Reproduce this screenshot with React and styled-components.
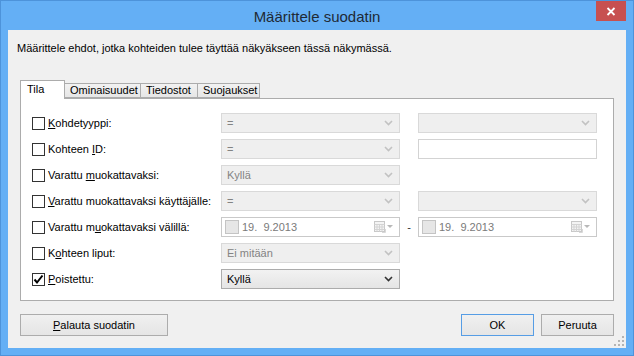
import styled, { createGlobalStyle } from "styled-components";

const GlobalStyle = createGlobalStyle`
  html, body {
    margin: 0;
    padding: 0;
  }
  body {
    width: 634px;
    height: 356px;
    overflow: hidden;
    font-family: "Liberation Sans", Arial, sans-serif;
    font-size: 11px;
    color: #000;
  }
`;

const Frame = styled.div`
  width: 634px;
  height: 356px;
  box-sizing: border-box;
  border: 1px solid #4d93da;
  background: #64aff5;
  display: flex;
  flex-direction: column;
`;

const TitleBar = styled.div`
  height: 29px;
  padding: 0 7px;
  display: grid;
  grid-template-columns: 1fr auto 1fr;
`;

const Title = styled.div`
  grid-column: 2;
  align-self: center;
  font-size: 15px;
  color: #1f2a36;
  padding-top: 1px;
`;

const CloseButton = styled.div`
  grid-column: 3;
  justify-self: end;
  width: 30px;
  height: 20px;
  background: #c75050;
  color: #fff;
  display: flex;
  align-items: center;
  justify-content: center;
`;

const Client = styled.div`
  flex: 1;
  margin: 0 7px 7px;
  background: #f0f0f0;
  padding: 11px 12px 0 9px;
  display: flex;
  flex-direction: column;
  position: relative;
`;

const Description = styled.div`
  line-height: 14px;
  height: 14px;
`;

const Tabs = styled.div`
  margin: 25px 0 0 3px;
  display: flex;
  flex-direction: column;
`;

const TabStrip = styled.div`
  display: flex;
  align-items: flex-end;
  height: 18px;
`;

const Tab = styled.div`
  box-sizing: border-box;
  width: ${(p) => p.$w}px;
  height: ${(p) => (p.$active ? 19 : 15)}px;
  margin-bottom: ${(p) => (p.$active ? -1 : 0)}px;
  margin-right: -1px;
  padding: ${(p) => (p.$active ? "2px 0 0 6px" : "0 0 0 5px")};
  border: 1px solid #acacac;
  border-bottom: ${(p) => (p.$active ? "none" : "1px solid #acacac")};
  background: ${(p) => (p.$active ? "#fff" : "linear-gradient(#f2f2f2, #e6e6e6)")};
  position: relative;
  z-index: ${(p) => (p.$active ? 2 : 1)};
  line-height: 13px;
  white-space: nowrap;
`;

const Panel = styled.div`
  width: 594px;
  box-sizing: border-box;
  border: 1px solid #acacac;
  background: #fff;
  padding: 14px 16px 11px 11px;
  display: flex;
  flex-direction: column;
  gap: 6px;
`;

const Row = styled.div`
  display: grid;
  grid-template-columns: 189px 179px 18px 179px;
  height: 20px;
  align-items: center;
`;

const CheckLabel = styled.label`
  display: flex;
  align-items: center;
  gap: 3px;
  white-space: nowrap;
`;

const CheckBox = styled.span`
  width: 13px;
  height: 13px;
  box-sizing: border-box;
  border: 1px solid #333;
  background: #fff;
  display: flex;
  align-items: center;
  justify-content: center;
`;

const U = styled.span`
  text-decoration: underline;
`;

const Combo = styled.div`
  grid-column: ${(p) => p.$col || 2};
  height: 20px;
  box-sizing: border-box;
  border: 1px solid ${(p) => (p.$enabled ? "#acacac" : "#d9d9d9")};
  background: ${(p) => (p.$enabled ? "linear-gradient(#f2f2f2, #e5e5e5)" : "#efefef")};
  color: ${(p) => (p.$enabled ? "#000" : "#838383")};
  padding: 0 6px 0 5px;
  display: flex;
  align-items: center;
  justify-content: space-between;
`;

const TextBox = styled.div`
  grid-column: 4;
  height: 20px;
  box-sizing: border-box;
  border: 1px solid #d3d3d3;
  background: #fff;
`;

const DatePicker = styled.div`
  grid-column: ${(p) => p.$col};
  height: 20px;
  box-sizing: border-box;
  border: 1px solid #c9c9c9;
  background: #fff;
  padding: 0 5px 0 3px;
  display: flex;
  align-items: center;
  gap: 3px;
  color: #7a7a7a;
`;

const DateCheck = styled.span`
  width: 14px;
  height: 14px;
  box-sizing: border-box;
  border: 1px solid #c4c4c4;
  background: #e6e6e6;
`;

const DateText = styled.span`
  flex: 1;
  white-space: pre;
`;

const Dash = styled.span`
  grid-column: 3;
  text-align: center;
  color: #333;
`;

const ButtonRow = styled.div`
  margin: 13px 0 0 3px;
  width: 594px;
  display: flex;
  justify-content: space-between;
`;

const ButtonGroup = styled.div`
  display: flex;
  gap: 7px;
`;

const Button = styled.div`
  width: ${(p) => p.$w}px;
  height: 22px;
  box-sizing: border-box;
  border: 1px solid ${(p) => (p.$default ? "#569de5" : "#acacac")};
  background: linear-gradient(#f0f0f0, #e5e5e5);
  display: flex;
  align-items: center;
  justify-content: center;
`;

const Grip = styled.svg`
  position: absolute;
  right: 2px;
  bottom: 2px;
`;

const Chevron = ({ dark }) => (
  <svg width="9" height="6" viewBox="0 0 9 6">
    <polyline
      points="1,1 4.5,4.5 8,1"
      fill="none"
      stroke={dark ? "#333" : "#c2c2c2"}
      strokeWidth="1.6"
    />
  </svg>
);

const Check = () => (
  <svg width="11" height="11" viewBox="0 0 11 11">
    <path d="M1.5 5.5 L4 8.5 L9.5 1.5" fill="none" stroke="#000" strokeWidth="2" />
  </svg>
);

const CalendarIcon = () => (
  <svg width="20" height="12" viewBox="0 0 20 12">
    <rect x="0.5" y="0.5" width="10" height="10" fill="#f4f4f4" stroke="#c8c8c8" />
    <path d="M0.5 3.5 H10.5 M0.5 6 H10.5 M0.5 8.5 H10.5 M3 3.5 V10.5 M5.5 3.5 V10.5 M8 3.5 V10.5" stroke="#d4d4d4" strokeWidth="1" />
    <path d="M8 11.5 H11.5 V8" fill="none" stroke="#d8d8d8" />
    <path d="M13 4 H19 L16 7 Z" fill="#b8b8b8" />
  </svg>
);

const Cross = () => (
  <svg width="10" height="9" viewBox="0 0 10 9">
    <path d="M1.5 1 L8.5 8 M8.5 1 L1.5 8" stroke="#fff" strokeWidth="1.8" />
  </svg>
);

const rows = [
  { label: [<U key="u">K</U>, "ohdetyyppi:"], kind: "two" },
  { label: ["Kohteen ", <U key="u">I</U>, "D:"], kind: "text" },
  { label: ["Varattu ", <U key="u">m</U>, "uokattavaksi:"], kind: "one", value: "Kyllä" },
  { label: [<U key="u">V</U>, "arattu muokattavaksi käyttäjälle:"], kind: "two" },
  { label: ["Varattu m", <U key="u">u</U>, "okattavaksi välillä:"], kind: "date" },
  { label: ["K", <U key="u">o</U>, "hteen liput:"], kind: "one", value: "Ei mitään" },
  { label: [<U key="u">P</U>, "oistettu:"], kind: "one", value: "Kyllä", checked: true, enabled: true },
];

const FilterRow = ({ row }) => (
  <Row>
    <CheckLabel>
      <CheckBox>{row.checked && <Check />}</CheckBox>
      <span>{row.label}</span>
    </CheckLabel>
    {row.kind === "date" ? (
      <>
        <DatePicker $col={2}>
          <DateCheck />
          <DateText>19.  9.2013</DateText>
          <CalendarIcon />
        </DatePicker>
        <Dash>-</Dash>
        <DatePicker $col={4}>
          <DateCheck />
          <DateText>19.  9.2013</DateText>
          <CalendarIcon />
        </DatePicker>
      </>
    ) : (
      <Combo $enabled={row.enabled}>
        <span>{row.kind === "one" ? row.value : "="}</span>
        <Chevron dark={row.enabled} />
      </Combo>
    )}
    {row.kind === "two" && (
      <Combo $col={4}>
        <span />
        <Chevron />
      </Combo>
    )}
    {row.kind === "text" && <TextBox />}
  </Row>
);

const App = () => {
  return (
    <Frame>
      <GlobalStyle />
      <TitleBar>
        <Title>Määrittele suodatin</Title>
        <CloseButton>
          <Cross />
        </CloseButton>
      </TitleBar>
      <Client>
        <Description>
          Määrittele ehdot, jotka kohteiden tulee täyttää näkyäkseen tässä näkymässä.
        </Description>
        <Tabs>
          <TabStrip>
            <Tab $active $w={45}>Tila</Tab>
            <Tab $w={77}>Ominaisuudet</Tab>
            <Tab $w={58}>Tiedostot</Tab>
            <Tab $w={63}>Suojaukset</Tab>
          </TabStrip>
          <Panel>
            {rows.map((row, i) => (
              <FilterRow key={i} row={row} />
            ))}
          </Panel>
        </Tabs>
        <ButtonRow>
          <Button $w={148}>
            <span>
              <U>P</U>alauta suodatin
            </span>
          </Button>
          <ButtonGroup>
            <Button $w={73} $default>
              OK
            </Button>
            <Button $w={73}>Peruuta</Button>
          </ButtonGroup>
        </ButtonRow>
        <Grip width="10" height="10" viewBox="0 0 10 10">
          <g fill="#b4b4b4">
            <rect x="8" y="0" width="2" height="2" />
            <rect x="4" y="4" width="2" height="2" />
            <rect x="8" y="4" width="2" height="2" />
            <rect x="0" y="8" width="2" height="2" />
            <rect x="4" y="8" width="2" height="2" />
            <rect x="8" y="8" width="2" height="2" />
          </g>
        </Grip>
      </Client>
    </Frame>
  );
};

export default App;
